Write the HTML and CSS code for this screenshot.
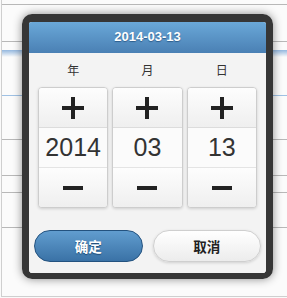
FILE: index.html
```html
<!DOCTYPE html>
<html lang="zh">
<head>
    <meta charset="UTF-8">
    <meta name="viewport" content="width=device-width, initial-scale=1.0">
    <title>Date Picker</title>
    <link rel="stylesheet" href="styles.css">
</head>
<body>
    <div class="page">
        <div class="row r1"></div>
        <div class="row r2"></div>
        <div class="row r3"></div>
        <div class="band"></div>
        <div class="row r4"></div>
        <div class="row r5"></div>
        <div class="row r6"></div>
        <div class="row r7"></div>
        <div class="row r8"></div>
        <div class="row r9"></div>
    </div>

    <div class="dialog">
        <div class="dialog-header">2014-03-13</div>
        <div class="dialog-body">
            <div class="labels">
                <span>年</span>
                <span>月</span>
                <span>日</span>
            </div>
            <div class="spinners">
                <div class="spinner">
                    <button class="step step-up">
                        <svg width="22" height="22" viewBox="0 0 22 22"><path d="M11 0V22M0 11H22" stroke="#222" stroke-width="4"/></svg>
                    </button>
                    <div class="value">2014</div>
                    <button class="step step-down">
                        <svg width="20" height="4" viewBox="0 0 20 4"><path d="M0 2H20" stroke="#222" stroke-width="4"/></svg>
                    </button>
                </div>
                <div class="spinner">
                    <button class="step step-up">
                        <svg width="22" height="22" viewBox="0 0 22 22"><path d="M11 0V22M0 11H22" stroke="#222" stroke-width="4"/></svg>
                    </button>
                    <div class="value">03</div>
                    <button class="step step-down">
                        <svg width="20" height="4" viewBox="0 0 20 4"><path d="M0 2H20" stroke="#222" stroke-width="4"/></svg>
                    </button>
                </div>
                <div class="spinner">
                    <button class="step step-up">
                        <svg width="22" height="22" viewBox="0 0 22 22"><path d="M11 0V22M0 11H22" stroke="#222" stroke-width="4"/></svg>
                    </button>
                    <div class="value">13</div>
                    <button class="step step-down">
                        <svg width="20" height="4" viewBox="0 0 20 4"><path d="M0 2H20" stroke="#222" stroke-width="4"/></svg>
                    </button>
                </div>
            </div>
            <div class="actions">
                <button class="btn btn-ok">确定</button>
                <button class="btn btn-cancel">取消</button>
            </div>
        </div>
    </div>
</body>
</html>
```
FILE: styles.css
```css
body {
    margin: 0;
    background: #fafafa;
    font-family: "Liberation Sans", "Noto Sans CJK SC", sans-serif;
}

/* list in the background */
.page {
    margin-left: 1px;
    border-left: 1px solid #cfcfcf;
    background: #fbfbfb;
}

.row {
    border-bottom: 1px solid #b8b8b8;
}

.r1 { height: 4px; }
.r2 { height: 36px; }
.r3 { height: 8px; border-bottom: none; }
.r4 { height: 38px; border-bottom-color: #9fc1e4; }
.r5 { height: 43px; }
.r6 { height: 35px; }
.r7 { height: 16px; }
.r8 { height: 34px; }
.r9 { height: 68px; border-bottom-color: #cfcfcf; }

.band {
    height: 7px;
    background: linear-gradient(#94b8df, #fbfbfb);
}

/* dialog */
.dialog {
    position: absolute;
    left: 22px;
    top: 14px;
    width: 237px;
    border-style: solid;
    border-color: #363636;
    border-width: 8px 7px 6px 7px;
    border-radius: 10px;
    box-shadow: 0 0 10px rgba(0, 0, 0, 0.45);
    overflow: hidden;
}

.dialog-header {
    height: 31px;
    line-height: 30px;
    text-align: center;
    color: #fff;
    font-size: 13px;
    font-weight: bold;
    text-shadow: 0 1px 1px #2d5d8c;
    background: linear-gradient(#6aa8d8, #4a80b4);
}

.dialog-body {
    background: #f3f3f3;
    padding: 11px 5px 11px 5px;
}

.labels {
    display: grid;
    grid-template-columns: repeat(3, 1fr);
    gap: 4px;
    padding: 0 4px;
    text-align: center;
    font-size: 12px;
    color: #333;
    line-height: 14px;
    margin-bottom: 9px;
}

.spinners {
    display: grid;
    grid-template-columns: repeat(3, 1fr);
    gap: 4px;
    padding: 0 4px;
}

.spinner {
    border: 1px solid #cdcdcd;
    border-radius: 4px;
    box-shadow: 0 1px 3px rgba(0, 0, 0, 0.15);
    background: #fbfbfb;
    overflow: hidden;
}

.step {
    display: flex;
    align-items: center;
    justify-content: center;
    width: 100%;
    height: 40px;
    padding: 0;
    border: none;
    background: linear-gradient(#fdfdfd, #efefef);
}

.step-up {
    border-bottom: 1px solid #dcdcdc;
}

.step-down {
    border-top: 1px solid #e4e4e4;
}

.value {
    height: 39px;
    line-height: 39px;
    text-align: center;
    font-size: 25px;
    color: #333;
    background: #fbfbfb;
}

.actions {
    display: flex;
    gap: 10px;
    margin-top: 22px;
}

.btn {
    flex: 1;
    height: 32px;
    border-radius: 16px;
    font-family: "Liberation Sans", "Noto Sans CJK SC", sans-serif;
    font-size: 13.5px;
    font-weight: bold;
}

.btn-ok {
    color: #fff;
    border: 1px solid #23527f;
    background: linear-gradient(#619dcf, #3a72a6);
    text-shadow: 0 1px 1px #1f4a73;
}

.btn-cancel {
    color: #222;
    border: 1px solid #cfcfcf;
    background: linear-gradient(#ffffff, #ececec);
    box-shadow: 0 1px 3px rgba(0, 0, 0, 0.15);
}
```
